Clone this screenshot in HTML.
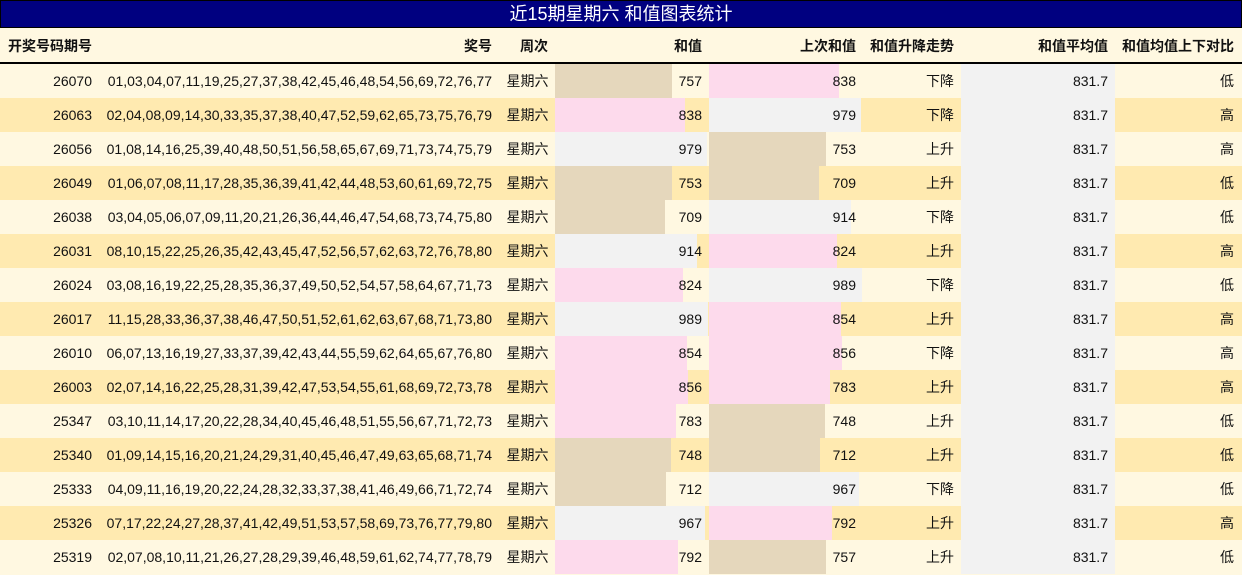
<!DOCTYPE html>
<html><head><meta charset="utf-8"><style>
*{margin:0;padding:0;box-sizing:border-box}
body{width:1242px;height:575px;background:#fff8e1;font-family:"Liberation Sans","Noto Sans CJK SC",sans-serif;font-size:14px;color:#111;overflow:hidden;position:relative}
.t{position:absolute;left:0;top:0;width:1242px;height:28px;background:#000080;border:1px solid #000;color:#fff;font-size:18px;text-align:center;line-height:27px}
.h{position:absolute;left:0;top:28px;width:1242px;height:36px;background:#fff8e1;border-bottom:2px solid #000;font-weight:bold}
.r{position:absolute;left:0;width:1242px;height:34px;background:#fff8e1}
.r.d{background:#ffeab0}
.c{position:absolute;top:0;height:100%;line-height:34px;text-align:right;white-space:nowrap}
.h .c{line-height:36px}
.b{position:absolute;top:0;height:34px}
.tan{background:#e5d7bc}.pk{background:#fddaec}.gy{background:#f2f2f2}
.a{position:absolute;top:0;left:961px;width:154px;height:34px;background:#f2f2f2}
.c1{left:0;width:92px}.c2{left:100px;width:392px}.c3{left:500px;width:55px;text-align:center}
.c4{left:555px;width:147px}.c5{left:709px;width:147px}.c6{left:861px;width:93px}
.c7{left:961px;width:147px}.c8{left:1115px;width:119px}
.h .c1{left:8px;text-align:left;width:100px}
</style></head><body>
<div class="t">近15期星期六 和值图表统计</div>
<div class="h"><div class="c c1">开奖号码期号</div><div class="c c2">奖号</div><div class="c c3" style="text-align:right;width:48px">周次</div><div class="c c4">和值</div><div class="c c5">上次和值</div><div class="c c6" style="left:861px;width:93px">和值升降走势</div><div class="c c7">和值平均值</div><div class="c c8">和值均值上下对比</div></div>

<div class="r" style="top:64px"><div class="b tan" style="left:555px;width:117px"></div><div class="b pk" style="left:709px;width:130px"></div><div class="a"></div><div class="c c1">26070</div><div class="c c2">01,03,04,07,11,19,25,27,37,38,42,45,46,48,54,56,69,72,76,77</div><div class="c c3">星期六</div><div class="c c4">757</div><div class="c c5">838</div><div class="c c6">下降</div><div class="c c7">831.7</div><div class="c c8">低</div></div>
<div class="r d" style="top:98px"><div class="b pk" style="left:555px;width:130px"></div><div class="b gy" style="left:709px;width:152px"></div><div class="a"></div><div class="c c1">26063</div><div class="c c2">02,04,08,09,14,30,33,35,37,38,40,47,52,59,62,65,73,75,76,79</div><div class="c c3">星期六</div><div class="c c4">838</div><div class="c c5">979</div><div class="c c6">下降</div><div class="c c7">831.7</div><div class="c c8">高</div></div>
<div class="r" style="top:132px"><div class="b gy" style="left:555px;width:152px"></div><div class="b tan" style="left:709px;width:117px"></div><div class="a"></div><div class="c c1">26056</div><div class="c c2">01,08,14,16,25,39,40,48,50,51,56,58,65,67,69,71,73,74,75,79</div><div class="c c3">星期六</div><div class="c c4">979</div><div class="c c5">753</div><div class="c c6">上升</div><div class="c c7">831.7</div><div class="c c8">高</div></div>
<div class="r d" style="top:166px"><div class="b tan" style="left:555px;width:117px"></div><div class="b tan" style="left:709px;width:110px"></div><div class="a"></div><div class="c c1">26049</div><div class="c c2">01,06,07,08,11,17,28,35,36,39,41,42,44,48,53,60,61,69,72,75</div><div class="c c3">星期六</div><div class="c c4">753</div><div class="c c5">709</div><div class="c c6">上升</div><div class="c c7">831.7</div><div class="c c8">低</div></div>
<div class="r" style="top:200px"><div class="b tan" style="left:555px;width:110px"></div><div class="b gy" style="left:709px;width:142px"></div><div class="a"></div><div class="c c1">26038</div><div class="c c2">03,04,05,06,07,09,11,20,21,26,36,44,46,47,54,68,73,74,75,80</div><div class="c c3">星期六</div><div class="c c4">709</div><div class="c c5">914</div><div class="c c6">下降</div><div class="c c7">831.7</div><div class="c c8">低</div></div>
<div class="r d" style="top:234px"><div class="b gy" style="left:555px;width:142px"></div><div class="b pk" style="left:709px;width:128px"></div><div class="a"></div><div class="c c1">26031</div><div class="c c2">08,10,15,22,25,26,35,42,43,45,47,52,56,57,62,63,72,76,78,80</div><div class="c c3">星期六</div><div class="c c4">914</div><div class="c c5">824</div><div class="c c6">上升</div><div class="c c7">831.7</div><div class="c c8">高</div></div>
<div class="r" style="top:268px"><div class="b pk" style="left:555px;width:128px"></div><div class="b gy" style="left:709px;width:153px"></div><div class="a"></div><div class="c c1">26024</div><div class="c c2">03,08,16,19,22,25,28,35,36,37,49,50,52,54,57,58,64,67,71,73</div><div class="c c3">星期六</div><div class="c c4">824</div><div class="c c5">989</div><div class="c c6">下降</div><div class="c c7">831.7</div><div class="c c8">低</div></div>
<div class="r d" style="top:302px"><div class="b gy" style="left:555px;width:153px"></div><div class="b pk" style="left:709px;width:132px"></div><div class="a"></div><div class="c c1">26017</div><div class="c c2">11,15,28,33,36,37,38,46,47,50,51,52,61,62,63,67,68,71,73,80</div><div class="c c3">星期六</div><div class="c c4">989</div><div class="c c5">854</div><div class="c c6">上升</div><div class="c c7">831.7</div><div class="c c8">高</div></div>
<div class="r" style="top:336px"><div class="b pk" style="left:555px;width:132px"></div><div class="b pk" style="left:709px;width:133px"></div><div class="a"></div><div class="c c1">26010</div><div class="c c2">06,07,13,16,19,27,33,37,39,42,43,44,55,59,62,64,65,67,76,80</div><div class="c c3">星期六</div><div class="c c4">854</div><div class="c c5">856</div><div class="c c6">下降</div><div class="c c7">831.7</div><div class="c c8">高</div></div>
<div class="r d" style="top:370px"><div class="b pk" style="left:555px;width:133px"></div><div class="b pk" style="left:709px;width:121px"></div><div class="a"></div><div class="c c1">26003</div><div class="c c2">02,07,14,16,22,25,28,31,39,42,47,53,54,55,61,68,69,72,73,78</div><div class="c c3">星期六</div><div class="c c4">856</div><div class="c c5">783</div><div class="c c6">上升</div><div class="c c7">831.7</div><div class="c c8">高</div></div>
<div class="r" style="top:404px"><div class="b pk" style="left:555px;width:121px"></div><div class="b tan" style="left:709px;width:116px"></div><div class="a"></div><div class="c c1">25347</div><div class="c c2">03,10,11,14,17,20,22,28,34,40,45,46,48,51,55,56,67,71,72,73</div><div class="c c3">星期六</div><div class="c c4">783</div><div class="c c5">748</div><div class="c c6">上升</div><div class="c c7">831.7</div><div class="c c8">低</div></div>
<div class="r d" style="top:438px"><div class="b tan" style="left:555px;width:116px"></div><div class="b tan" style="left:709px;width:111px"></div><div class="a"></div><div class="c c1">25340</div><div class="c c2">01,09,14,15,16,20,21,24,29,31,40,45,46,47,49,63,65,68,71,74</div><div class="c c3">星期六</div><div class="c c4">748</div><div class="c c5">712</div><div class="c c6">上升</div><div class="c c7">831.7</div><div class="c c8">低</div></div>
<div class="r" style="top:472px"><div class="b tan" style="left:555px;width:111px"></div><div class="b gy" style="left:709px;width:150px"></div><div class="a"></div><div class="c c1">25333</div><div class="c c2">04,09,11,16,19,20,22,24,28,32,33,37,38,41,46,49,66,71,72,74</div><div class="c c3">星期六</div><div class="c c4">712</div><div class="c c5">967</div><div class="c c6">下降</div><div class="c c7">831.7</div><div class="c c8">低</div></div>
<div class="r d" style="top:506px"><div class="b gy" style="left:555px;width:150px"></div><div class="b pk" style="left:709px;width:123px"></div><div class="a"></div><div class="c c1">25326</div><div class="c c2">07,17,22,24,27,28,37,41,42,49,51,53,57,58,69,73,76,77,79,80</div><div class="c c3">星期六</div><div class="c c4">967</div><div class="c c5">792</div><div class="c c6">上升</div><div class="c c7">831.7</div><div class="c c8">高</div></div>
<div class="r" style="top:540px"><div class="b pk" style="left:555px;width:123px"></div><div class="b tan" style="left:709px;width:117px"></div><div class="a"></div><div class="c c1">25319</div><div class="c c2">02,07,08,10,11,21,26,27,28,29,39,46,48,59,61,62,74,77,78,79</div><div class="c c3">星期六</div><div class="c c4">792</div><div class="c c5">757</div><div class="c c6">上升</div><div class="c c7">831.7</div><div class="c c8">低</div></div>
</body></html>
